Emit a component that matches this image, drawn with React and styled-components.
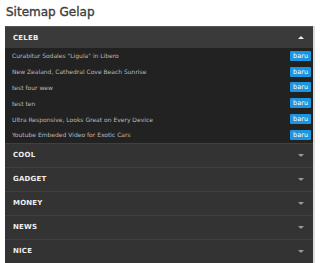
import styled, { createGlobalStyle } from 'styled-components';

const GlobalStyle = createGlobalStyle`
  html, body {
    margin: 0;
    padding: 0;
    background: #fff;
  }
`;

const Page = styled.div`
  width: 320px;
  padding: 5px 5px 0 5px;
  box-sizing: border-box;
  font-family: 'DejaVu Sans', Verdana, sans-serif;
`;

const Title = styled.h2`
  margin: 0 0 6px 1px;
  font-size: 12px;
  line-height: 15px;
  font-weight: normal;
  color: #3c3c3c;
  -webkit-text-stroke: 0.35px #3c3c3c;
`;

const Panel = styled.div`
  width: 308px;
  background: #333;
  border-right: 2px solid #ddd;
`;

const Header = styled.div`
  display: flex;
  align-items: center;
  justify-content: space-between;
  height: ${p => (p.open ? '22px' : '24px')};
  padding: 0 8px;
  background: ${p => (p.open ? '#3a3a3a' : '#333')};
  border-top: 1px solid ${p => (p.open ? '#555' : '#404040')};
  box-sizing: border-box;
  color: #eee;
  font-size: 7px;
  font-weight: bold;
  letter-spacing: 0.2px;
`;

const Arrow = styled.span`
  width: 0;
  height: 0;
  border-left: 3px solid transparent;
  border-right: 3px solid transparent;
  ${p => (p.up ? 'border-bottom: 3px solid #eee;' : 'border-top: 3px solid #999;')}
  margin-right: 1px;
`;

const List = styled.ul`
  list-style: none;
  margin: 0;
  padding: 0;
  background: #222;
`;

const Item = styled.li`
  display: flex;
  align-items: center;
  justify-content: space-between;
  height: 15.8px;
  padding: 0 2px 0 7px;
  font-size: 6px;
  color: #bbb;
`;

const Badge = styled.span`
  background: #1c96dc;
  color: #fff;
  font-size: 6.5px;
  line-height: 8px;
  padding: 1px 3px;
  border-radius: 1px;
`;

const items = [
  'Curabitur Sodales "Ligula" in Libero',
  'New Zealand, Cathedral Cove Beach Sunrise',
  'test four wew',
  'test ten',
  'Ultra Responsive, Looks Great on Every Device',
  'Youtube Embeded Video for Exotic Cars',
];

const sections = ['COOL', 'GADGET', 'MONEY', 'NEWS', 'NICE'];

export default function App() {
  return (
    <Page>
      <GlobalStyle />
      <Title>Sitemap Gelap</Title>
      <Panel>
        <Header open>
          <span>CELEB</span>
          <Arrow up />
        </Header>
        <List>
          {items.map(t => (
            <Item key={t}>
              <span>{t}</span>
              <Badge>baru</Badge>
            </Item>
          ))}
        </List>
        {sections.map(s => (
          <Header key={s}>
            <span>{s}</span>
            <Arrow />
          </Header>
        ))}
      </Panel>
    </Page>
  );
}
